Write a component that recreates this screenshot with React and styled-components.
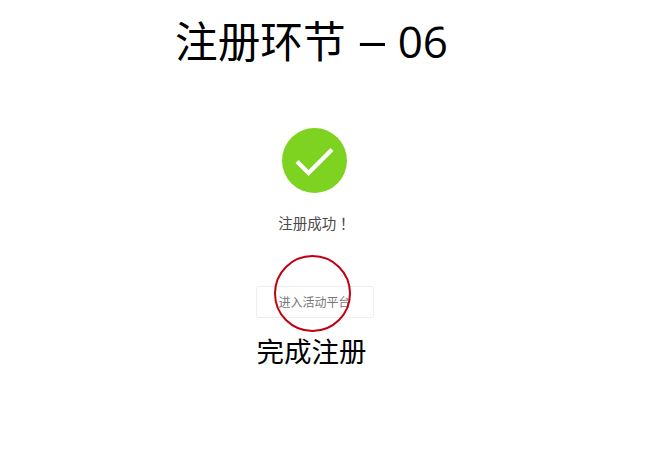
import React from 'react'
import styled, { createGlobalStyle } from 'styled-components'

const GlobalStyle = createGlobalStyle`
  html, body {
    margin: 0;
    padding: 0;
    background: #fff;
    font-family: "Open Sans", "Noto Sans CJK SC", sans-serif;
  }
`

const Page = styled.div`
  width: 629px;
  display: flex;
  flex-direction: column;
  align-items: center;
`

const Title = styled.h1`
  margin: 11px 0 1px;
  padding-right: 6px;
  height: 60px;
  font-size: 42.67px;
  line-height: 60px;
  font-weight: 400;
  color: #000;
  white-space: nowrap;
`

const Dash = styled.span`
  display: inline-block;
  width: 23px;
  margin: 0 14px 0 15px;
  text-align: center;
  transform: translateY(-2px) scaleX(1.4);
`

const Digits = styled.span`
  font-size: 44px;
`

const SuccessIcon = styled.div`
  margin-top: 56px;
  width: 65px;
  height: 65px;
  border-radius: 50%;
  background: #7ed321;
  display: flex;
  align-items: center;
  justify-content: center;
`

const Message = styled.p`
  margin: 20px 0 0;
  font-size: 14.5px;
  line-height: 20px;
  color: #4a4a4a;
`

const Bang = styled.span`
  font-family: "Noto Sans CJK TC", sans-serif;
`

const Actions = styled.div`
  margin-top: 52px;
  width: 118px;
  display: flex;
  flex-direction: column;
  align-items: flex-start;
`

const EnterButton = styled.div`
  position: relative;
  width: 118px;
  height: 32px;
  box-sizing: border-box;
  border: 1px solid #eee;
  border-radius: 2px;
  background: #fff;
  display: flex;
  align-items: center;
  justify-content: center;
  font-size: 12px;
  color: #777;
`

const Highlight = styled.div`
  position: absolute;
  left: 17px;
  top: -32px;
  width: 77px;
  height: 77px;
  box-sizing: border-box;
  border: 2px solid #c00010;
  border-radius: 50%;
`

const Finish = styled.div`
  margin: 16px 0 0 1px;
  font-size: 27.5px;
  line-height: 36px;
  color: #000;
  white-space: nowrap;
`

export default function App() {
  return (
    <Page>
      <GlobalStyle />
      <Title>注册环节<Dash>–</Dash><Digits>06</Digits></Title>
      <SuccessIcon>
        <svg width="65" height="65" viewBox="0 0 65 65" fill="none">
          <path d="M15 33.5 L26.5 45 L50 21.5" stroke="#fff" strokeWidth="4.2" />
        </svg>
      </SuccessIcon>
      <Message>注册成功<Bang>！</Bang></Message>
      <Actions>
        <EnterButton>
          进入活动平台
          <Highlight />
        </EnterButton>
        <Finish>完成注册</Finish>
      </Actions>
    </Page>
  )
}
